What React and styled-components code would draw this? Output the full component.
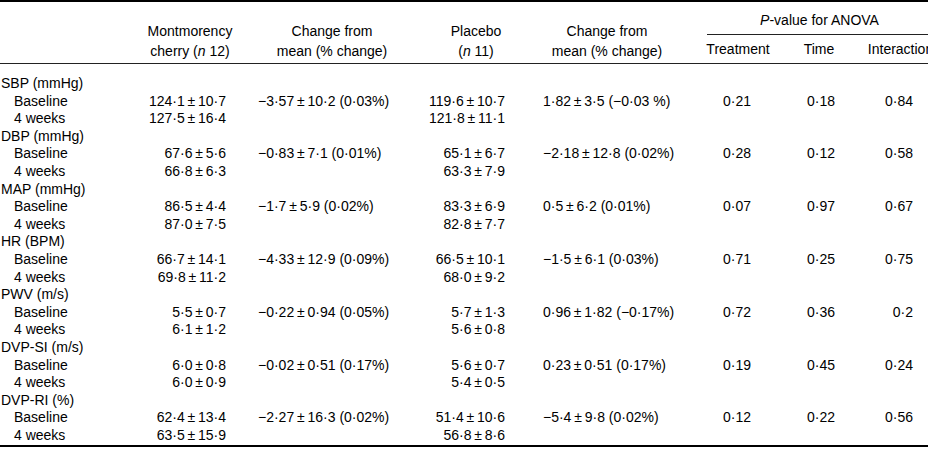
import React from "react";
import styled, { createGlobalStyle } from "styled-components";

const Global = createGlobalStyle`
  html, body { margin: 0; padding: 0; background: #fff; overflow: hidden; }
  body { font-family: "Liberation Sans", Arial, sans-serif; color: #000; }
`;

const Frame = styled.div`
  width: 928px;
  height: 450px;
  overflow: hidden;
`;

const Table = styled.table`
  table-layout: fixed;
  width: 953px;
  border-collapse: separate;
  border-spacing: 0;
  border-top: 2px solid #000;
  font-size: 14px;
`;

const HeadCell = styled.th`
  font-weight: normal;
  text-align: center;
  line-height: 20px;
  padding: ${(p) => p.$pad || "0"};
  vertical-align: bottom;
  white-space: nowrap;
  border-bottom: ${(p) => (p.$rule ? "1px solid #222" : "none")};
`;

const SpanRule = styled.div`
  margin: 0 21px 0 21px;
  border-bottom: 1px solid #222;
  padding: 8px 0 4px;
  line-height: 20px;
  text-align: center;
`;

const Cell = styled.td`
  height: 17.6px;
  line-height: 17.6px;
  white-space: nowrap;
  padding: 0;
  vertical-align: top;
  padding-left: ${(p) => p.$pl || 0}px;
  padding-right: ${(p) => p.$pr || 0}px;
  text-align: ${(p) => p.$align || "left"};
  tr:first-child > & { padding-top: 11px; }
  tr:last-child > & { padding-bottom: 1px; border-bottom: 2px solid #000; }
`;

const Txt = styled.span`
  display: block;
  height: 17.6px;
  overflow: visible;
`;

const cols = [140, 100, 184, 104, 158, 104, 58, 105];

const S = "\u2009";
const pm = (a, b) => `${a}${S}±${S}${b}`;

const rows = [
  ["SBP (mmHg)",
    [pm("124·1", "10·7"), pm("−3·57", "10·2") + " (0·03%)", pm("119·6", "10·7"), pm("1·82", "3·5") + " (−0·03 %)", "0·21", "0·18", "0·84"],
    [pm("127·5", "16·4"), "", pm("121·8", "11·1")]],
  ["DBP (mmHg)",
    [pm("67·6", "5·6"), pm("−0·83", "7·1") + " (0·01%)", pm("65·1", "6·7"), pm("−2·18", "12·8") + " (0·02%)", "0·28", "0·12", "0·58"],
    [pm("66·8", "6·3"), "", pm("63·3", "7·9")]],
  ["MAP (mmHg)",
    [pm("86·5", "4·4"), pm("−1·7", "5·9") + " (0·02%)", pm("83·3", "6·9"), pm("0·5", "6·2") + " (0·01%)", "0·07", "0·97", "0·67"],
    [pm("87·0", "7·5"), "", pm("82·8", "7·7")]],
  ["HR (BPM)",
    [pm("66·7", "14·1"), pm("−4·33", "12·9") + " (0·09%)", pm("66·5", "10·1"), pm("−1·5", "6·1") + " (0·03%)", "0·71", "0·25", "0·75"],
    [pm("69·8", "11·2"), "", pm("68·0", "9·2")]],
  ["PWV (m/s)",
    [pm("5·5", "0·7"), pm("−0·22", "0·94") + " (0·05%)", pm("5·7", "1·3"), pm("0·96", "1·82") + " (−0·17%)", "0·72", "0·36", "0·2"],
    [pm("6·1", "1·2"), "", pm("5·6", "0·8")]],
  ["DVP-SI (m/s)",
    [pm("6·0", "0·8"), pm("−0·02", "0·51") + " (0·17%)", pm("5·6", "0·7"), pm("0·23", "0·51") + " (0·17%)", "0·19", "0·45", "0·24"],
    [pm("6·0", "0·9"), "", pm("5·4", "0·5")]],
  ["DVP-RI (%)",
    [pm("62·4", "13·4"), pm("−2·27", "16·3") + " (0·02%)", pm("51·4", "10·6"), pm("−5·4", "9·8") + " (0·02%)", "0·12", "0·22", "0·56"],
    [pm("63·5", "15·9"), "", pm("56·8", "8·6")]],
];

const colStyle = [
  { $align: "right", $pr: 14 },
  { $align: "left", $pl: 18 },
  { $align: "right", $pr: 23 },
  { $align: "left", $pl: 15 },
  { $align: "left", $pl: 37 },
  { $align: "left", $pl: 17 },
  { $align: "right", $pr: 40 },
];

function DataRow({ label, values, indent }) {
  const cells = [];
  for (let i = 0; i < 7; i++) {
    cells.push(
      <Cell key={i} {...colStyle[i]}>
        <Txt>{values[i] || ""}</Txt>
      </Cell>
    );
  }
  return (
    <tr>
      <Cell $pl={indent ? 14 : 1}>
        <Txt>{label}</Txt>
      </Cell>
      {cells}
    </tr>
  );
}

export default function App() {
  const body = [];
  rows.forEach(([group, base, wk]) => {
    body.push(<DataRow key={group} label={group} values={[]} />);
    body.push(<DataRow key={group + "b"} label="Baseline" values={base} indent />);
    body.push(<DataRow key={group + "w"} label="4 weeks" values={wk} indent />);
  });
  return (
    <>
      <Global />
      <Frame>
        <Table>
          <colgroup>
            {cols.map((w, i) => (
              <col key={i} style={{ width: w }} />
            ))}
          </colgroup>
          <thead>
            <tr>
              <HeadCell rowSpan={2} $rule $pad="0 0 2px" />
              <HeadCell rowSpan={2} $rule $pad="0 0 2px">
                Montmorency
                <br />
                cherry (<i>n</i> 12)
              </HeadCell>
              <HeadCell rowSpan={2} $rule $pad="0 0 2px">
                Change from
                <br />
                mean (% change)
              </HeadCell>
              <HeadCell rowSpan={2} $rule $pad="0 0 2px">
                Placebo
                <br />(<i>n</i> 11)
              </HeadCell>
              <HeadCell rowSpan={2} $rule $pad="0 0 2px">
                Change from
                <br />
                mean (% change)
              </HeadCell>
              <HeadCell colSpan={3}>
                <SpanRule>
                  <i>P</i>-value for ANOVA
                </SpanRule>
              </HeadCell>
            </tr>
            <tr>
              <HeadCell $rule $pad="4px 0 4px">Treatment</HeadCell>
              <HeadCell $rule $pad="4px 0 4px">Time</HeadCell>
              <HeadCell $rule $pad="4px 0 4px">Interaction</HeadCell>
            </tr>
          </thead>
          <tbody>{body}</tbody>
        </Table>
      </Frame>
    </>
  );
}
